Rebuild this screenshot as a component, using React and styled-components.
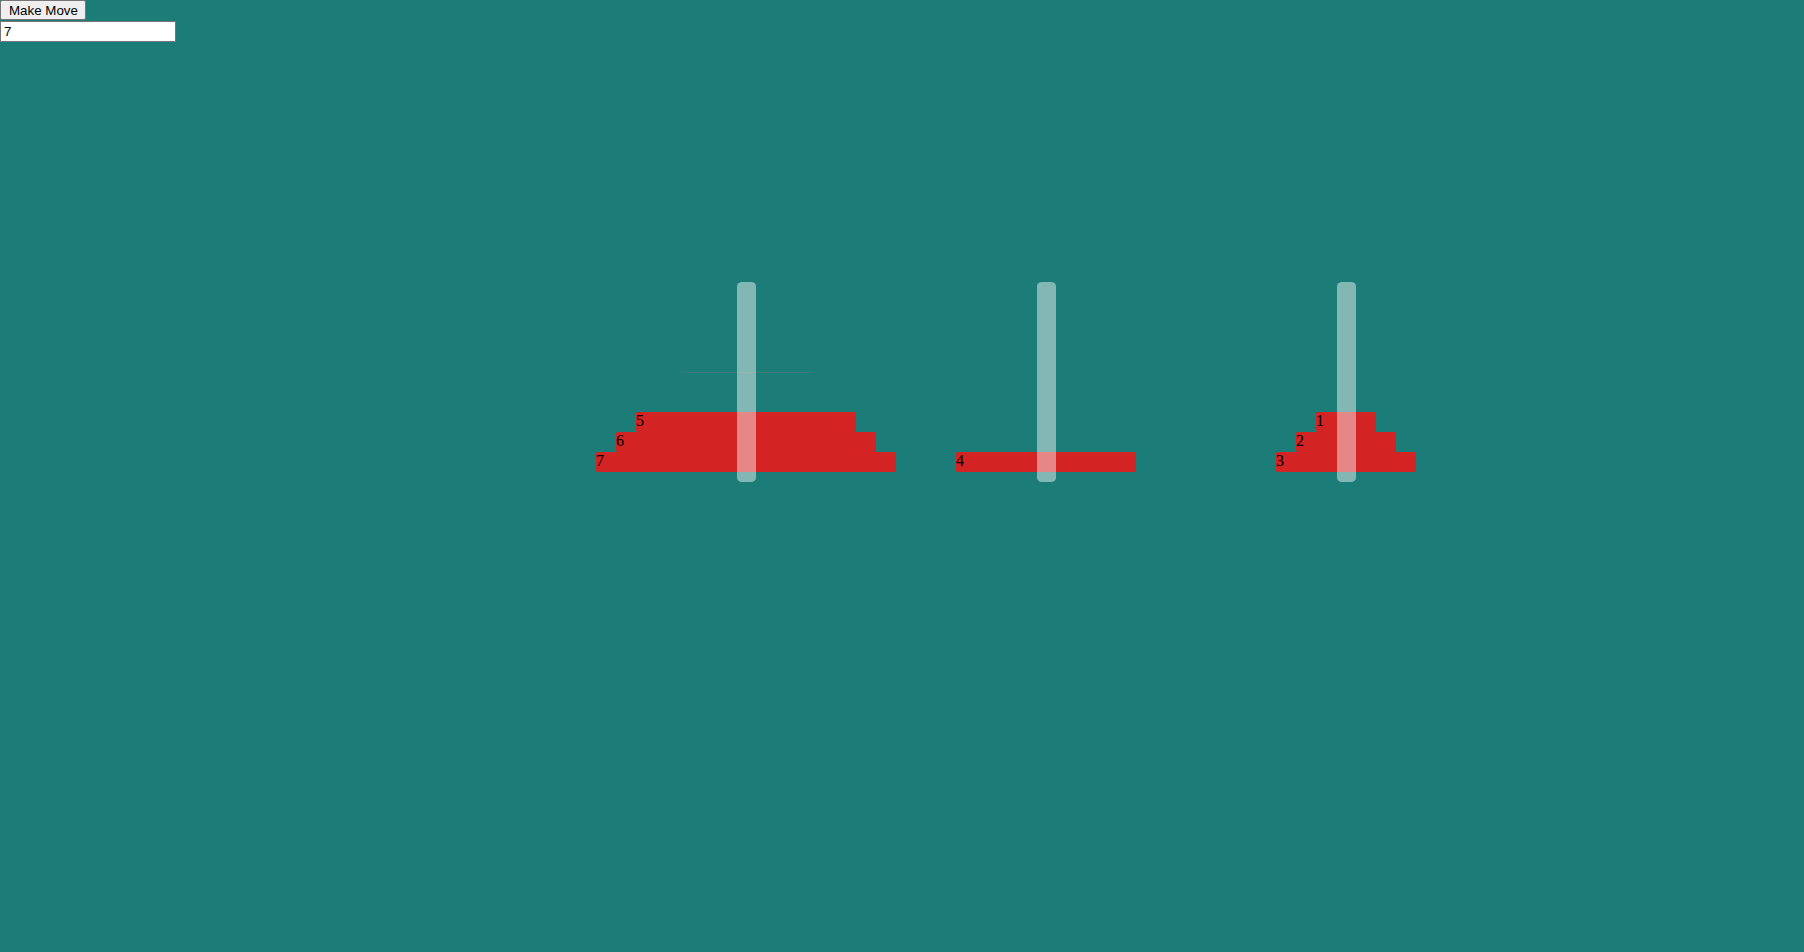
import React from "react";
import styled, { createGlobalStyle } from "styled-components";

const Global = createGlobalStyle`
  html, body {
    margin: 0;
    padding: 0;
    background: #1c7c77;
    min-height: 100%;
  }
  body {
    font-family: "Liberation Serif", "Times New Roman", serif;
    font-size: 16px;
  }
`;

const Page = styled.div`
  min-height: 952px;
  background: #1c7c77;
`;

const Controls = styled.div`
  display: flex;
  flex-direction: column;
  align-items: flex-start;
  gap: 1px;
`;

const MoveButton = styled.button`
  font-family: "Liberation Sans", Arial, sans-serif;
  font-size: 13.333px;
  height: 20px;
  padding: 1px 7px 1px 8px;
  margin: 0;
  color: #000;
  background: #efefef;
  border: 1px solid #767676;
  border-radius: 2px;
  line-height: normal;
`;

const CountInput = styled.input`
  font-family: "Liberation Sans", Arial, sans-serif;
  font-size: 13.333px;
  width: 176px;
  height: 21px;
  box-sizing: border-box;
  margin: 0;
  padding: 1px 3px;
  border: 1px solid #767676;
  background: #fff;
  color: #000;
  outline: none;
`;

const Board = styled.div`
  display: flex;
  margin-top: 240px;
  padding-left: 596px;
`;

const Tower = styled.div`
  position: relative;
  width: 300px;
  height: 200px;
  display: flex;
  flex-direction: column;
  justify-content: flex-end;
  align-items: center;
  padding-bottom: 10px;
  box-sizing: border-box;
`;

const Peg = styled.div`
  position: absolute;
  top: 0;
  left: 141px;
  width: 19px;
  height: 200px;
  border-radius: 5px / 4px;
  background: rgba(255, 255, 255, 0.45);
`;

const Trace = styled.div`
  position: absolute;
  top: 90px;
  left: 85px;
  width: 132px;
  height: 1px;
  background: rgba(120, 120, 110, 0.35);
`;

const Disk = styled.div`
  width: ${(p) => p.$size * 40 + 20}px;
  height: 20px;
  background: #d32323;
  border-radius: 2px;
  color: #000;
  font-family: "Liberation Serif", "Times New Roman", serif;
  font-size: 16px;
  line-height: 18px;
  text-align: left;
  flex-shrink: 0;
`;

const towers = [[5, 6, 7], [4], [1, 2, 3]];

export default function App() {
  return (
    <Page>
      <Global />
      <Controls>
        <MoveButton>Make Move</MoveButton>
        <CountInput defaultValue="7" />
      </Controls>
      <Board>
        {towers.map((disks, i) => (
          <Tower key={i}>
            {i === 0 && <Trace />}
            {disks.map((d) => (
              <Disk key={d} $size={d}>
                {d}
              </Disk>
            ))}
            <Peg />
          </Tower>
        ))}
      </Board>
    </Page>
  );
}
